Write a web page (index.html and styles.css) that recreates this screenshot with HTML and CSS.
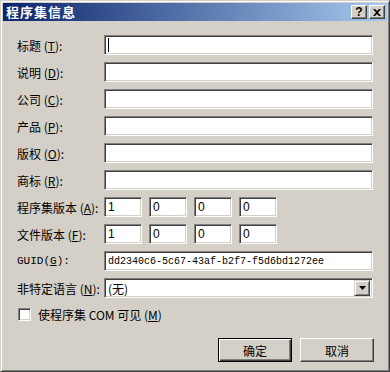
FILE: index.html
```html
<!DOCTYPE html>
<html lang="zh-CN">
  <head>
    <meta charset="UTF-8" />
    <title>程序集信息</title>
    <link rel="stylesheet" href="styles.css">
  </head>
  <body>
    <div class="window">
      <div class="titleBar">
        <span class="titleText">程序集信息</span>
        <div class="titleBtns">
          <span class="capBtn">?</span>
          <span class="capBtn">
            <svg width="8" height="7" viewBox="0 0 8 7">
              <path d="M0 0h2l2 2 2-2h2L5 3.5 8 7H6L4 5 2 7H0l3-3.5z" fill="#000" />
            </svg>
          </span>
        </div>
      </div>

      <form class="content" autocomplete="off">
        <div class="row">
          <label class="lbl">标题 (<u>T</u>):</label>
          <div class="field wide"><span class="caret"></span></div>
        </div>
        <div class="row">
          <label class="lbl">说明 (<u>D</u>):</label>
          <div class="field wide"></div>
        </div>
        <div class="row">
          <label class="lbl">公司 (<u>C</u>):</label>
          <div class="field wide"></div>
        </div>
        <div class="row">
          <label class="lbl">产品 (<u>P</u>):</label>
          <div class="field wide"></div>
        </div>
        <div class="row">
          <label class="lbl">版权 (<u>O</u>):</label>
          <div class="field wide"></div>
        </div>
        <div class="row">
          <label class="lbl">商标 (<u>R</u>):</label>
          <div class="field wide"></div>
        </div>
        <div class="row">
          <label class="lbl">程序集版本 (<u>A</u>):</label>
          <div class="verBox">
            <div class="field ver">1</div>
            <div class="field ver">0</div>
            <div class="field ver">0</div>
            <div class="field ver">0</div>
          </div>
        </div>
        <div class="row">
          <label class="lbl">文件版本 (<u>F</u>):</label>
          <div class="verBox">
            <div class="field ver">1</div>
            <div class="field ver">0</div>
            <div class="field ver">0</div>
            <div class="field ver">0</div>
          </div>
        </div>
        <div class="row">
          <label class="lbl mono">GUID(<u>G</u>):</label>
          <div class="field wide mono">dd2340c6-5c67-43af-b2f7-f5d6bd1272ee</div>
        </div>
        <div class="row">
          <label class="lbl">非特定语言 (<u>N</u>):</label>
          <div class="field wide combo">
            <span class="comboText">(无)</span>
            <span class="dropBtn">
              <svg width="7" height="4" viewBox="0 0 7 4"><path d="M0 0h7L3.5 4z" fill="#000" /></svg>
            </span>
          </div>
        </div>
        <div class="checkRow">
          <span class="checkBox"></span>
          <span class="checkText">使程序集 COM 可见 (<u>M</u>)</span>
        </div>

        <div class="btnRow">
          <button type="button" class="btn default">确定</button>
          <button type="button" class="btn">取消</button>
        </div>
      </form>
    </div>
  </body>
</html>
```

FILE: styles.css
```css
html,
body {
  margin: 0;
  padding: 0;
}
body {
  width: 390px;
  height: 372px;
  overflow: hidden;
  font-family: 'Noto Sans CJK SC', 'Liberation Sans', sans-serif;
  font-size: 12px;
  color: #000;
}
.window {
  box-sizing: border-box;
  width: 390px;
  height: 372px;
  background: #d4d0c8;
  border: 1px solid;
  border-color: #d4d0c8 #404040 #404040 #d4d0c8;
  box-shadow: inset 1px 1px #fff, inset -1px -1px #808080;
  padding: 2px;
  display: flex;
  flex-direction: column;
}
.titleBar {
  height: 18px;
  display: flex;
  align-items: center;
  justify-content: space-between;
  background: linear-gradient(to right, #0a246a, #a6caf0);
  padding: 0 2px 0 3px;
}
.titleText {
  color: #fff;
  font-weight: 700;
  font-size: 13px;
  letter-spacing: 1px;
  line-height: 18px;
}
.titleBtns {
  display: flex;
  gap: 2px;
}
.capBtn {
  box-sizing: border-box;
  width: 16px;
  height: 14px;
  background: #d4d0c8;
  border: 1px solid;
  border-color: #fff #404040 #404040 #fff;
  box-shadow: inset -1px -1px #808080;
  display: flex;
  align-items: center;
  justify-content: center;
  font-family: 'Liberation Sans', sans-serif;
  font-weight: 700;
  font-size: 12px;
  line-height: 1;
}
.content {
  margin: 0;
  padding: 14px 0 0 14px;
  display: flex;
  flex-direction: column;
  gap: 7px;
  flex: 1;
}
.row {
  display: flex;
  align-items: center;
  height: 20px;
}
.lbl {
  width: 87px;
  flex-shrink: 0;
  white-space: nowrap;
  font-size: 12px;
}
.lbl u,
.checkText u {
  text-underline-offset: 1px;
}
.mono {
  font-family: 'Liberation Mono', monospace;
  font-size: 10px;
}
.lbl.mono {
  font-size: 11px;
}
.field {
  box-sizing: border-box;
  height: 20px;
  background: #fff;
  border: 1px solid;
  border-color: #808080 #fff #fff #808080;
  box-shadow: inset 1px 1px #404040, inset -1px -1px #d4d0c8;
  padding: 0 3px;
  display: flex;
  align-items: center;
  white-space: nowrap;
  overflow: hidden;
}
.wide {
  width: 269px;
}
.caret {
  width: 1px;
  height: 14px;
  background: #000;
}
.verBox {
  display: flex;
  gap: 7px;
}
.field.ver {
  width: 38px;
  font-family: 'Liberation Sans', sans-serif;
  font-size: 12px;
}
.combo {
  justify-content: space-between;
  padding: 0 2px 0 3px;
}
.dropBtn {
  box-sizing: border-box;
  width: 16px;
  height: 16px;
  background: #d4d0c8;
  border: 1px solid;
  border-color: #d4d0c8 #404040 #404040 #d4d0c8;
  box-shadow: inset 1px 1px #fff, inset -1px -1px #808080;
  display: flex;
  align-items: center;
  justify-content: center;
}
.checkRow {
  display: flex;
  align-items: center;
  gap: 7px;
  margin-top: 1px;
  margin-left: 1px;
}
.checkBox {
  box-sizing: border-box;
  width: 13px;
  height: 13px;
  background: #fff;
  border: 1px solid;
  border-color: #808080 #fff #fff #808080;
  box-shadow: inset 1px 1px #404040, inset -1px -1px #d4d0c8;
}
.btnRow {
  display: flex;
  justify-content: flex-end;
  gap: 8px;
  margin-top: 8px;
  padding-right: 13px;
}
.btn {
  box-sizing: border-box;
  width: 74px;
  height: 24px;
  background: #d4d0c8;
  border: 1px solid;
  border-color: #fff #404040 #404040 #fff;
  box-shadow: inset -1px -1px #808080;
  font-family: 'Noto Sans CJK SC', sans-serif;
  font-size: 12px;
  padding: 0;
}
.btn.default {
  border: 1px solid #000;
  box-shadow: inset 1px 1px #fff, inset -1px -1px #404040, inset -2px -2px #808080;
}
```
